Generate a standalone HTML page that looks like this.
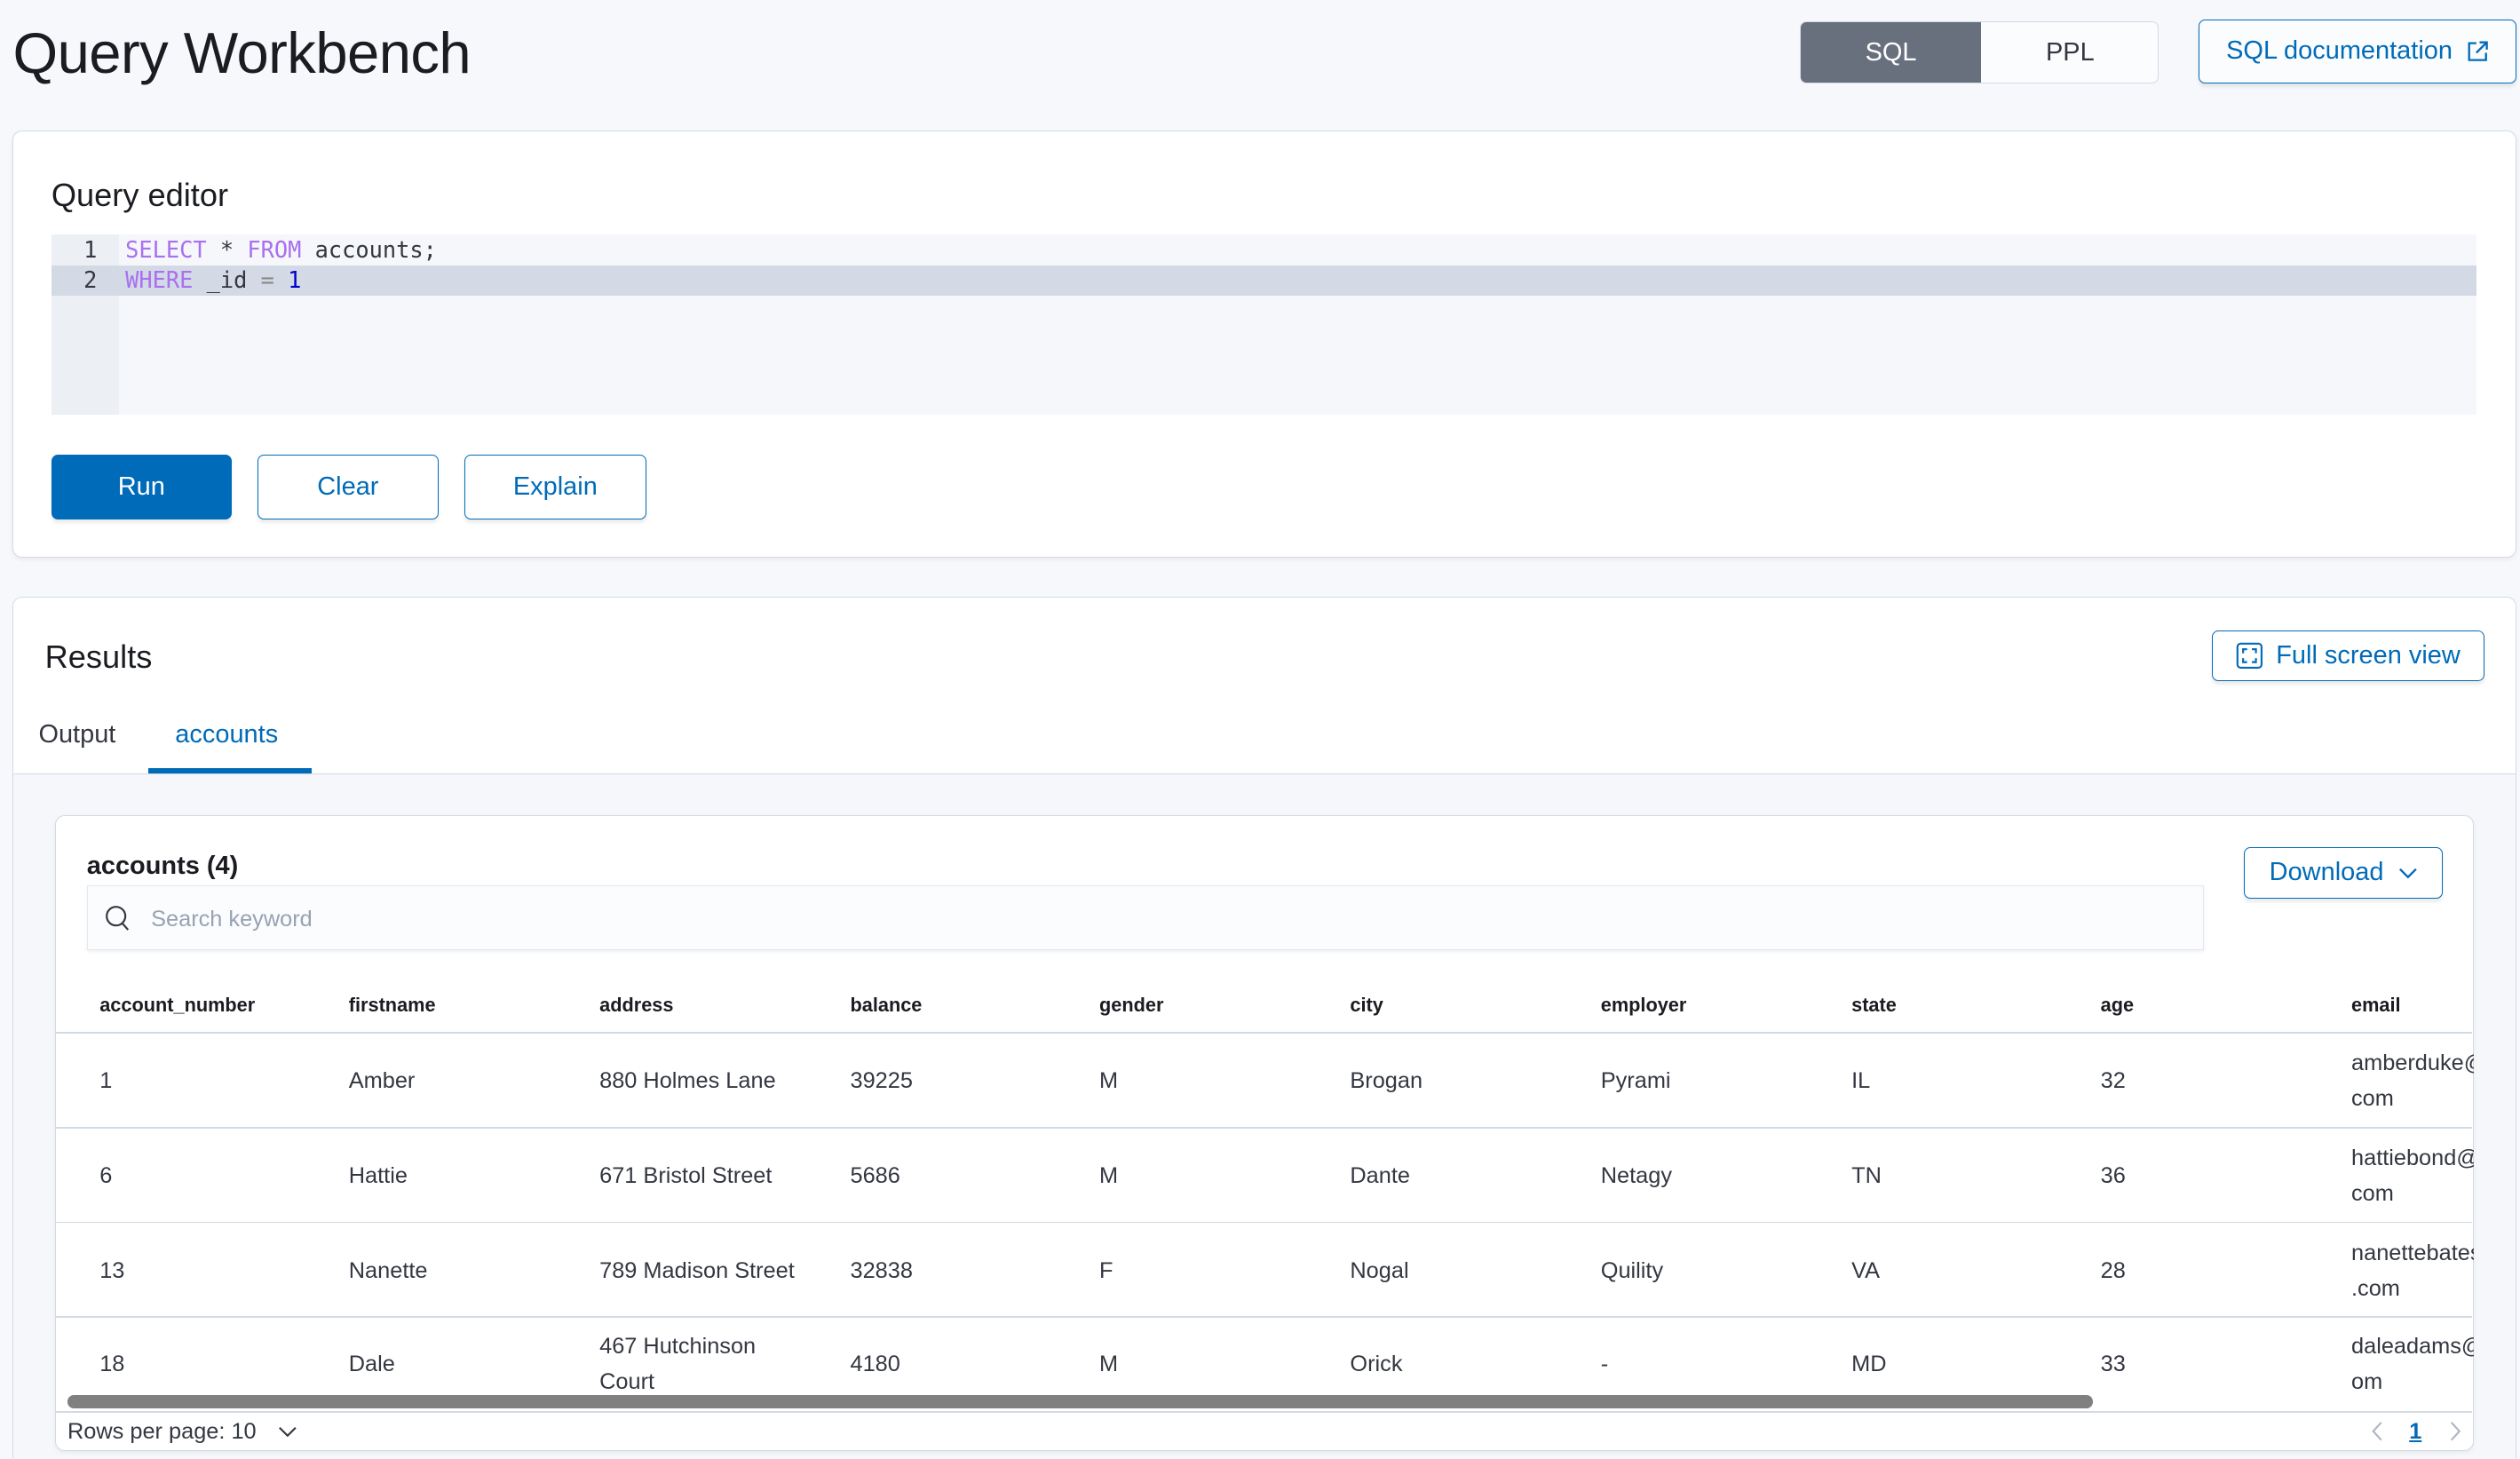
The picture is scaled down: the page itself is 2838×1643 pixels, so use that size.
<!DOCTYPE html>
<html><head><meta charset="utf-8">
<style>
*{box-sizing:border-box;margin:0;padding:0}
html,body{width:2838px;height:1643px;overflow:hidden;background:#f7f8fc}
#r{position:relative;width:1568px;height:907px;zoom:1.81;font-family:"Liberation Sans",sans-serif;color:#343741;background:#f7f8fc;overflow:hidden}
.a{position:absolute}
.t{position:absolute;white-space:nowrap}
.btn{position:absolute;border:1px solid #006bb8;border-radius:4px;color:#006bb8;background:#fff;font-size:16px;display:flex;align-items:center;justify-content:center;box-shadow:0 2px 2px rgba(0,0,0,.08)}
.mono{font-family:"DejaVu Sans Mono","Liberation Mono",monospace;font-size:14px}
.th{position:absolute;top:618px;font-size:12px;font-weight:bold;color:#1a1c21}
.td{position:absolute;font-size:14px;color:#343741;line-height:22px}
.hl{position:absolute;left:34px;width:1504px;height:1px;background:#d3dae6}
</style></head><body><div id="r">
<div class="t" style="left:8px;top:12px;font-size:36px;color:#1a1c21;letter-spacing:-0.3px">Query Workbench</div>

<div class="a" style="left:1120px;top:13px;width:223px;height:39px;border:1px solid #d3dae6;border-radius:4px;background:#fbfcfd;overflow:hidden">
 <div class="a" style="left:0;top:0;width:112px;height:39px;background:#69707d;color:#fff;font-size:16px;display:flex;align-items:center;justify-content:center">SQL</div>
 <div class="a" style="left:112px;top:0;width:111px;height:39px;color:#343741;font-size:16px;display:flex;align-items:center;justify-content:center">PPL</div>
</div>
<div class="btn" style="left:1368px;top:12px;width:198px;height:40px;background:#fbfcfd;font-size:16px">SQL documentation&nbsp;&nbsp;
<svg width="14" height="14" viewBox="0 0 14 14" fill="none" stroke="#006bb8" stroke-width="1.3"><path d="M6 2H1.5v10.5H12V8"/><path d="M8 1.5h4.5V6M12.5 1.5L6 8"/></svg></div>

<div class="a" style="left:8px;top:81px;width:1558px;height:266px;background:#fff;border:1px solid #d3dae6;border-radius:6px;box-shadow:0 1px 3px rgba(0,0,0,.06)"></div>
<div class="t" style="left:32px;top:110px;font-size:20px;color:#1a1c21">Query editor</div>
<div class="a" style="left:32px;top:146px;width:1509px;height:112px;background:#f5f7fa"></div>
<div class="a" style="left:32px;top:146px;width:42px;height:112px;background:#eceff4"></div>
<div class="a" style="left:32px;top:165px;width:1509px;height:19px;background:#d3dae6"></div>
<div class="t mono" style="left:52px;top:147px;line-height:17px">1</div>
<div class="t mono" style="left:52px;top:166px;line-height:17px">2</div>
<div class="t mono" style="left:78px;top:147px;line-height:17px"><span style="color:#a970ef">SELECT</span> * <span style="color:#a970ef">FROM</span> accounts;</div>
<div class="t mono" style="left:78px;top:166px;line-height:17px"><span style="color:#a970ef">WHERE</span> _id <span style="color:#888">=</span> <span style="color:#0000cc">1</span></div>

<div class="btn" style="left:32px;top:283px;width:112px;height:40px;background:#006bb8;color:#fff">Run</div>
<div class="btn" style="left:160px;top:283px;width:113px;height:40px">Clear</div>
<div class="btn" style="left:289px;top:283px;width:113px;height:40px">Explain</div>

<div class="a" style="left:8px;top:371px;width:1558px;height:560px;background:#f5f7fa;border:1px solid #d3dae6;border-radius:6px;overflow:hidden">
 <div class="a" style="left:0;top:0;width:1558px;height:110px;background:#fff;border-bottom:1px solid #d3dae6"></div>
</div>
<div class="t" style="left:28px;top:397px;font-size:20px;color:#1a1c21">Results</div>
<div class="btn" style="left:1376px;top:392px;width:170px;height:32px;font-size:16px">
<svg width="17" height="17" viewBox="0 0 17 17" fill="none" stroke="#006bb8" stroke-width="1.2" style="margin-right:8px"><rect x="1" y="1" width="15" height="15" rx="2"/><path d="M4.5 7V4.5H7M10 4.5h2.5V7M12.5 10v2.5H10M7 12.5H4.5V10"/></svg>Full screen view</div>
<div class="t" style="left:24px;top:448px;font-size:16px;color:#343741">Output</div>
<div class="t" style="left:109px;top:448px;font-size:16px;color:#006bb8">accounts</div>
<div class="a" style="left:92px;top:478px;width:102px;height:3px;background:#006bb8"></div>

<div class="a" style="left:34px;top:507px;width:1505px;height:396px;background:#fff;border:1px solid #d3dae6;border-radius:6px;box-shadow:0 1px 3px rgba(0,0,0,.06)"></div>
<div class="t" style="left:54px;top:530px;font-size:16px;font-weight:bold;color:#1a1c21">accounts (4)</div>
<div class="btn" style="left:1396px;top:527px;width:124px;height:32px;font-size:16px">Download&nbsp;&nbsp;
<svg width="12" height="8" viewBox="0 0 12 8" fill="none" stroke="#006bb8" stroke-width="1.3"><path d="M1 1.5l5 5 5-5"/></svg></div>
<div class="a" style="left:54px;top:551px;width:1317px;height:40px;background:#fbfcfd;border:1px solid #e3e7ef;box-shadow:0 1px 2px rgba(0,0,0,.06)"></div>
<svg class="a" style="left:65px;top:563px" width="17" height="17" viewBox="0 0 17 17" fill="none" stroke="#343741" stroke-width="1.2"><circle cx="7" cy="7" r="5.8"/><path d="M10.5 11l4 4.5"/></svg>
<div class="t" style="left:94px;top:564px;font-size:14px;color:#98a2b3">Search keyword</div>

<div class="th" style="left:62px">account_number</div>
<div class="th" style="left:217px">firstname</div>
<div class="th" style="left:373px">address</div>
<div class="th" style="left:529px">balance</div>
<div class="th" style="left:684px">gender</div>
<div class="th" style="left:840px">city</div>
<div class="th" style="left:996px">employer</div>
<div class="th" style="left:1152px">state</div>
<div class="th" style="left:1307px">age</div>
<div class="th" style="left:1463px">email</div>

<div class="hl" style="top:642px"></div>
<div class="hl" style="top:701px"></div>
<div class="hl" style="top:760px"></div>
<div class="hl" style="top:819px"></div>
<div class="hl" style="top:878px"></div>

<div class="td" style="left:62px;top:662px">1</div><div class="td" style="left:217px;top:662px">Amber</div><div class="td" style="left:373px;top:662px">880 Holmes Lane</div><div class="td" style="left:529px;top:662px">39225</div><div class="td" style="left:684px;top:662px">M</div><div class="td" style="left:840px;top:662px">Brogan</div><div class="td" style="left:996px;top:662px">Pyrami</div><div class="td" style="left:1152px;top:662px">IL</div><div class="td" style="left:1307px;top:662px">32</div>
<div class="td" style="left:1463px;top:651px;width:76px;overflow:hidden">amberduke@<br>com</div>

<div class="td" style="left:62px;top:721px">6</div><div class="td" style="left:217px;top:721px">Hattie</div><div class="td" style="left:373px;top:721px">671 Bristol Street</div><div class="td" style="left:529px;top:721px">5686</div><div class="td" style="left:684px;top:721px">M</div><div class="td" style="left:840px;top:721px">Dante</div><div class="td" style="left:996px;top:721px">Netagy</div><div class="td" style="left:1152px;top:721px">TN</div><div class="td" style="left:1307px;top:721px">36</div>
<div class="td" style="left:1463px;top:710px;width:76px;overflow:hidden">hattiebond@<br>com</div>

<div class="td" style="left:62px;top:780px">13</div><div class="td" style="left:217px;top:780px">Nanette</div><div class="td" style="left:373px;top:780px">789 Madison Street</div><div class="td" style="left:529px;top:780px">32838</div><div class="td" style="left:684px;top:780px">F</div><div class="td" style="left:840px;top:780px">Nogal</div><div class="td" style="left:996px;top:780px">Quility</div><div class="td" style="left:1152px;top:780px">VA</div><div class="td" style="left:1307px;top:780px">28</div>
<div class="td" style="left:1463px;top:769px;width:76px;overflow:hidden">nanettebates<br>.com</div>

<div class="td" style="left:62px;top:838px">18</div><div class="td" style="left:217px;top:838px">Dale</div><div class="td" style="left:373px;top:827px">467 Hutchinson<br>Court</div><div class="td" style="left:529px;top:838px">4180</div><div class="td" style="left:684px;top:838px">M</div><div class="td" style="left:840px;top:838px">Orick</div><div class="td" style="left:996px;top:838px">-</div><div class="td" style="left:1152px;top:838px">MD</div><div class="td" style="left:1307px;top:838px">33</div>
<div class="td" style="left:1463px;top:827px;width:76px;overflow:hidden">daleadams@<br>om</div>

<div class="a" style="left:42px;top:868px;width:1260px;height:8px;background:#808080;border-radius:4px"></div>
<div class="t" style="left:42px;top:883px;font-size:14px">Rows per page: 10</div>
<svg class="a" style="left:173px;top:887px" width="12" height="8" viewBox="0 0 12 8" fill="none" stroke="#343741" stroke-width="1.2"><path d="M1 1.5l5 5 5-5"/></svg>
<svg class="a" style="left:1475px;top:884px" width="8" height="13" viewBox="0 0 8 13" fill="none" stroke="#b0b6c0" stroke-width="1.2"><path d="M6.5 1L1.5 6.5l5 5.5"/></svg>
<div class="t" style="left:1499px;top:883px;font-size:14px;font-weight:bold;color:#006bb8;text-decoration:underline">1</div>
<svg class="a" style="left:1524px;top:884px" width="8" height="13" viewBox="0 0 8 13" fill="none" stroke="#b0b6c0" stroke-width="1.2"><path d="M1.5 1l5 5.5-5 5.5"/></svg>
</div></body></html>
